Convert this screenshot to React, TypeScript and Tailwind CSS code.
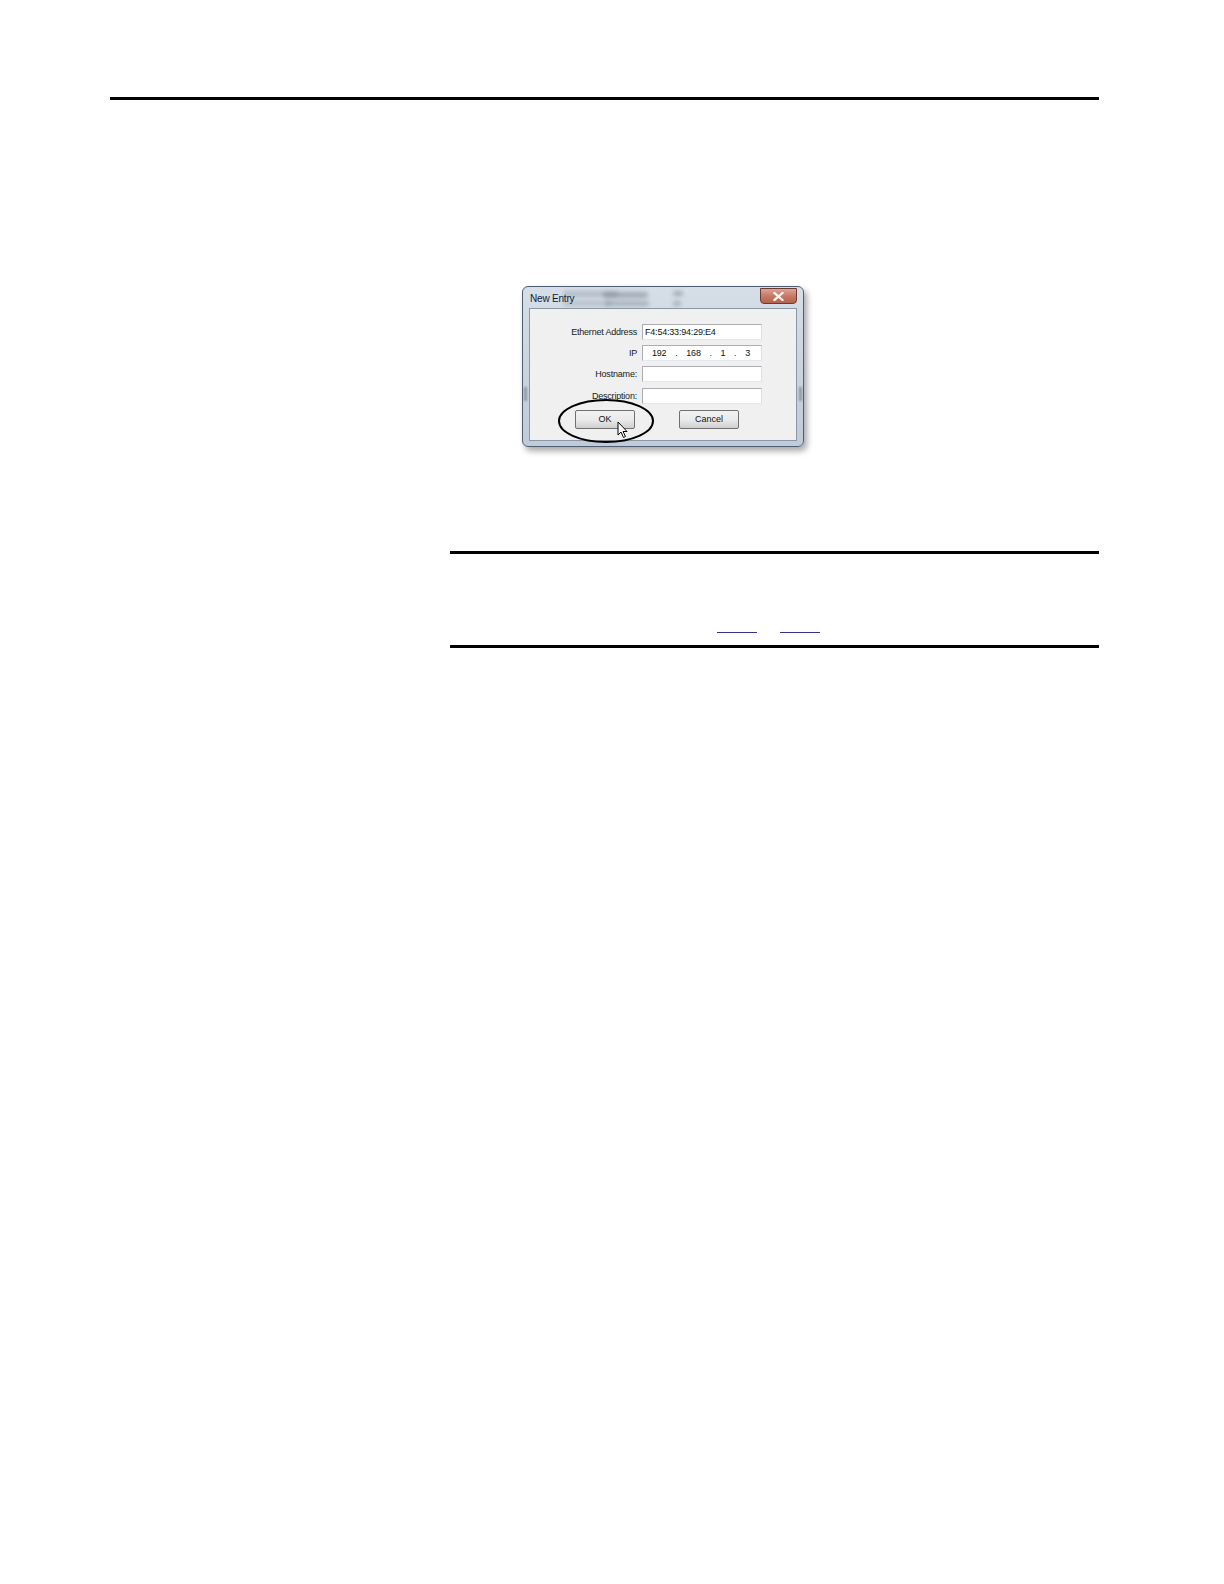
import React from "react";

const dlgFont = { fontFamily: '"Liberation Sans", Arial, sans-serif' };

const Field = ({ label, value }: { label: string; value?: React.ReactNode }) => (
  <div className="flex items-center h-[16px]">
    <div className="w-[108px] pr-[1px] text-right text-[9px] leading-none text-[#1a1a1a] tracking-[-0.2px]">{label}</div>
    <div className="ml-[4px] w-[120px] h-[16px] bg-white border border-[#abadb3] border-b-[#e3e9ef] border-r-[#dbdfe6] flex items-center pl-[2px] text-[9px] leading-none text-[#111] tracking-[-0.2px]">
      {value}
    </div>
  </div>
);

const Button = ({ children }: { children: React.ReactNode }) => (
  <div className="w-[60px] h-[19px] rounded-[2px] border border-[#707070] bg-gradient-to-b from-[#f2f2f2] via-[#ebebeb] to-[#cfcfcf] flex items-center justify-center text-[9px] leading-none text-[#111]">
    {children}
  </div>
);

const NewEntryDialog = () => (
  <div
    className="relative w-[282px] h-[161px] rounded-[6px] border border-[#4f5e70] bg-gradient-to-b from-[#d6dee7] via-[#cbd4de] to-[#bfcbd8] shadow-[3px_4px_6px_rgba(0,0,0,0.35)] flex flex-col px-[6px] pb-[5px]"
    style={dlgFont}
  >
    {/* blurred background items seen through the glass */}
    <div className="absolute left-[40px] top-[4px] w-[55px] h-[6px] bg-[#7f8c99] opacity-40 blur-[2px] rounded" />
    <div className="absolute left-[80px] top-[5px] w-[45px] h-[6px] bg-[#6f7c8a] opacity-50 blur-[2px] rounded" />
    <div className="absolute left-[40px] top-[14px] w-[48px] h-[5px] bg-[#7f8c99] opacity-35 blur-[2px] rounded" />
    <div className="absolute left-[82px] top-[14px] w-[44px] h-[5px] bg-[#6f7c8a] opacity-45 blur-[2px] rounded" />
    <div className="absolute left-[150px] top-[4px] w-[10px] h-[5px] bg-[#6f7c8a] opacity-50 blur-[2px] rounded" />
    <div className="absolute left-[150px] top-[14px] w-[8px] h-[5px] bg-[#6f7c8a] opacity-45 blur-[2px] rounded" />
    <div className="absolute left-[1px] top-[100px] w-[3px] h-[14px] bg-[#56606b] opacity-50 blur-[1px]" />
    <div className="absolute right-[1px] top-[100px] w-[3px] h-[14px] bg-[#56606b] opacity-50 blur-[1px]" />

    <div className="relative flex h-[21px] items-start">
      <div className="pt-[7px] pl-[1px] text-[10px] leading-none text-[#0b1c3d] tracking-[-0.2px]">New Entry</div>
      <div className="ml-auto mt-[1px] w-[37px] h-[16px] rounded-b-[4px] border border-[#6e3a30] bg-gradient-to-b from-[#dca497] via-[#c67966] to-[#b5624e] flex items-center justify-center">
        <svg width="11" height="9" viewBox="0 0 11 9">
          <path d="M1.5 1 L9.5 8 M9.5 1 L1.5 8" stroke="#f4f4f4" strokeWidth="2.3" strokeLinecap="square" />
        </svg>
      </div>
    </div>

    <div className="relative flex-1 bg-[#f0f0f0] border border-[#8a97a6] flex flex-col pt-[15px]">
      <div className="flex flex-col">
        <Field label="Ethernet Address" value="F4:54:33:94:29:E4" />
        <div className="mt-[5px]">
          <Field
            label="IP"
            value={
              <div className="flex w-full justify-between pl-[7px] pr-[11px] text-[9px]">
                <span>192</span><span>.</span><span>168</span><span>.</span><span>1</span><span>.</span><span>3</span>
              </div>
            }
          />
        </div>
        <div className="mt-[5px]">
          <Field label="Hostname:" value="" />
        </div>
        <div className="mt-[6px]">
          <Field label="Description:" value="" />
        </div>
      </div>
      <div className="flex mt-[6px] pl-[45px] gap-[44px]">
        <Button>OK</Button>
        <Button>Cancel</Button>
      </div>

      {/* hand-drawn annotation ellipse and mouse cursor */}
      <svg className="absolute left-[27px] top-[89px]" width="98" height="46" viewBox="0 0 98 46">
        <ellipse cx="49" cy="23" rx="47" ry="21" fill="none" stroke="#000" strokeWidth="2" />
      </svg>
      <svg className="absolute left-[87px] top-[112px]" width="12" height="18" viewBox="0 0 12 18">
        <path d="M1 1 L1 14 L4 11 L6.5 16.5 L8.5 15.5 L6 10.5 L10 10.5 Z" fill="#ffffff" stroke="#000" strokeWidth="1" strokeLinejoin="round" />
      </svg>
    </div>
  </div>
);

export default function App() {
  return (
    <div className="w-full min-h-screen bg-white" style={dlgFont}>
      <div className="pt-[97px]">
        <div className="ml-[110px] w-[989px] h-[3px] bg-black" />
      </div>

      <div className="ml-[522px] mt-[186px] w-[282px]">
        <NewEntryDialog />
      </div>

      <div className="ml-[450px] mt-[104px] w-[649px] h-[3px] bg-black" />

      <div className="ml-[450px] w-[649px] h-[80px] flex items-end pb-[1px]">
        <div className="ml-[267px] w-[40px] h-[1px] bg-[#33338a]" />
        <div className="ml-[23px] w-[40px] h-[1px] bg-[#33338a]" />
      </div>

      <div className="ml-[450px] mt-[11px] w-[649px] h-[3px] bg-black" />
    </div>
  );
}
